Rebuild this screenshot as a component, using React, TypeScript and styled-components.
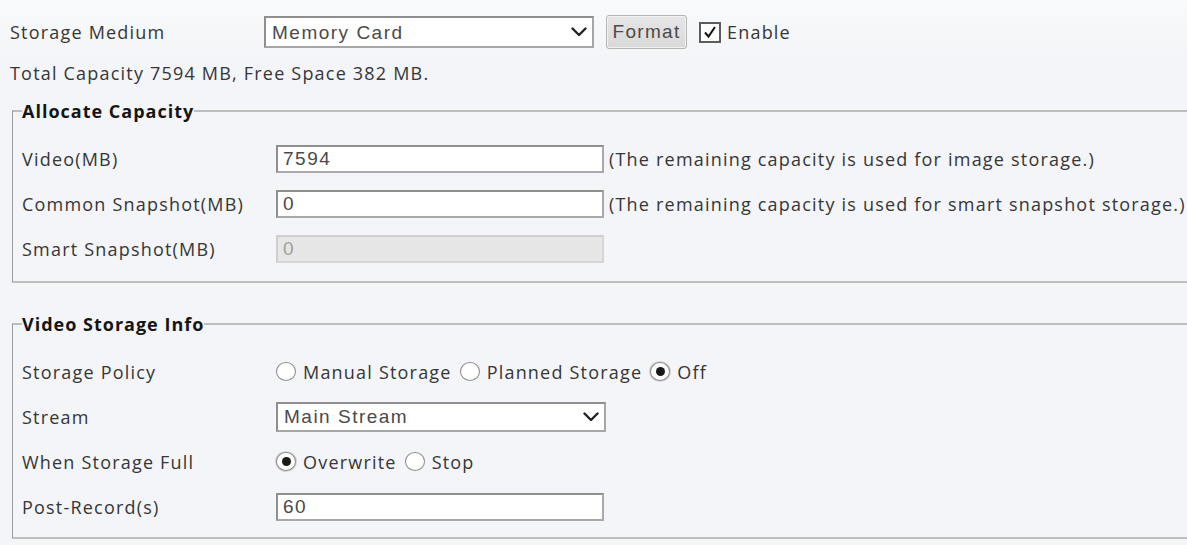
import React from "react";
import styled, { createGlobalStyle } from "styled-components";

const GlobalStyle = createGlobalStyle`
  html, body {
    margin: 0;
    padding: 0;
    background: #f3f5f8;
    overflow: hidden;
  }
`;

const Page = styled.div`
  width: 1187px;
  min-height: 545px;
  box-sizing: border-box;
  padding: 16px 0 0 10px;
  background: linear-gradient(#f9fafb 0px, #f3f5f8 60px);
  font-family: "Open Sans", "Noto Sans", sans-serif;
  font-size: 18px;
  letter-spacing: 1.2px;
  color: #363636;
`;

const TopRow = styled.div`
  display: flex;
  align-items: center;
  height: 32px;
`;

const Label = styled.div`
  width: 254px;
  flex: none;
  line-height: 24px;
  white-space: nowrap;
`;

const SelectWrap = styled.div<{ $w: number; $h: number }>`
  position: relative;
  width: ${(p) => p.$w}px;
  height: ${(p) => p.$h}px;
  flex: none;
`;

const NativeSelect = styled.select`
  appearance: none;
  -webkit-appearance: none;
  width: 100%;
  height: 100%;
  box-sizing: border-box;
  margin: 0;
  padding: 0 30px 0 6px;
  border: 2px solid #8f8f8f;
  border-right-color: #a6a6a6;
  border-bottom-color: #a6a6a6;
  background: #ffffff;
  font-family: "Liberation Sans", Arial, sans-serif;
  font-size: 19px;
  letter-spacing: 1.5px;
  color: #4a4a4a;
  outline: none;
`;

const Chevron = styled.svg`
  position: absolute;
  right: 7px;
  top: 50%;
  transform: translateY(-50%);
  pointer-events: none;
`;

const FormatButton = styled.button`
  margin-left: 12px;
  height: 34px;
  width: 81px;
  box-sizing: border-box;
  border: 1px solid #b4b4b4;
  border-radius: 3px;
  background: linear-gradient(#e6e6e6, #d9d9d9);
  box-shadow: inset 0 0 0 1px #f2f2f2;
  font-family: "Liberation Sans", Arial, sans-serif;
  font-size: 19px;
  letter-spacing: 1.3px;
  color: #4a4a4a;
  padding: 0;
`;

const CheckLabel = styled.label`
  display: flex;
  align-items: center;
  margin-left: 12px;
  gap: 6px;
`;

const CheckBox = styled.span`
  width: 22px;
  height: 21px;
  box-sizing: border-box;
  border: 2px solid #5c5c5c;
  background: #fff;
  display: flex;
  align-items: center;
  justify-content: center;
`;

const InfoLine = styled.div`
  margin-top: 13px;
  line-height: 24px;
`;

const Fieldset = styled.fieldset<{ $mt: number; $pb: number }>`
  margin: ${(p) => p.$mt}px -4px 0 2px;
  padding: 0 0 ${(p) => p.$pb}px 9px;
  border-style: solid;
  border-width: 2px 2px 2px 1px;
  border-color: #bdbdbd;
  border-left-color: #9a9a9a;
  min-width: 0;
`;

const Legend = styled.legend`
  padding: 0;
  margin-left: 0;
  line-height: 24px;
  font-weight: 700;
  font-size: 18px;
  letter-spacing: 1px;
  color: #151515;
`;

const Rows = styled.div`
  padding-top: 13px;
  display: flex;
  flex-direction: column;
`;

const Row = styled.div`
  display: flex;
  align-items: center;
  height: 45px;
`;

const TextInput = styled.input<{ $disabled?: boolean }>`
  width: 328px;
  height: 28px;
  box-sizing: border-box;
  margin: 0;
  padding: 0 5px;
  border: 2px solid ${(p) => (p.$disabled ? "#cfcfcf" : "#8f8f8f")};
  border-right-color: ${(p) => (p.$disabled ? "#d6d6d6" : "#a9a9a9")};
  border-bottom-color: ${(p) => (p.$disabled ? "#d6d6d6" : "#a9a9a9")};
  background: ${(p) => (p.$disabled ? "#e6e6e6" : "#ffffff")};
  color: ${(p) => (p.$disabled ? "#a0a0a0" : "#4a4a4a")};
  font-family: "Liberation Sans", Arial, sans-serif;
  font-size: 19px;
  letter-spacing: 1.5px;
  outline: none;
`;

const Hint = styled.span`
  margin-left: 5px;
  white-space: nowrap;
`;

const RadioGroup = styled.div`
  display: flex;
  align-items: center;
  gap: 8px;
`;

const RadioItem = styled.label`
  display: flex;
  align-items: center;
  gap: 7px;
  white-space: nowrap;
`;

const RadioCircle = styled.span<{ $on?: boolean }>`
  width: 20px;
  height: 19px;
  box-sizing: border-box;
  border-radius: 50%;
  border: 1px solid #8a8a8a;
  background: #fff;
  box-shadow: ${(p) => (p.$on ? "0 0 0 1px #d6d6d6" : "none")};
  display: flex;
  align-items: center;
  justify-content: center;
  &::after {
    content: "";
    width: 9px;
    height: 9px;
    border-radius: 50%;
    background: ${(p) => (p.$on ? "#1a1a1a" : "transparent")};
  }
`;

const ChevronIcon = () => (
  <Chevron width="16" height="10" viewBox="0 0 16 10">
    <path d="M1.5 1.5 L8 8 L14.5 1.5" fill="none" stroke="#222" strokeWidth="2.4" strokeLinecap="round" strokeLinejoin="round" />
  </Chevron>
);

const Select = ({ w, h, value }: { w: number; h: number; value: string }) => (
  <SelectWrap $w={w} $h={h}>
    <NativeSelect defaultValue={value}>
      <option>{value}</option>
    </NativeSelect>
    <ChevronIcon />
  </SelectWrap>
);

const Radio = ({ label, on }: { label: string; on?: boolean }) => (
  <RadioItem>
    <RadioCircle $on={on} />
    {label}
  </RadioItem>
);

export default function App() {
  return (
    <>
      <GlobalStyle />
      <Page>
        <TopRow>
          <Label>Storage Medium</Label>
          <Select w={330} h={32} value="Memory Card" />
          <FormatButton>Format</FormatButton>
          <CheckLabel>
            <CheckBox>
              <svg width="14" height="14" viewBox="0 0 14 14">
                <path d="M2 7.5 L5.5 11.5 L12 2" fill="none" stroke="#111" strokeWidth="2" />
              </svg>
            </CheckBox>
            Enable
          </CheckLabel>
        </TopRow>
        <InfoLine>Total Capacity 7594 MB, Free Space 382 MB.</InfoLine>

        <Fieldset $mt={14} $pb={10}>
          <Legend>Allocate Capacity</Legend>
          <Rows>
            <Row>
              <Label>Video(MB)</Label>
              <TextInput defaultValue="7594" />
              <Hint>(The remaining capacity is used for image storage.)</Hint>
            </Row>
            <Row>
              <Label>Common Snapshot(MB)</Label>
              <TextInput defaultValue="0" />
              <Hint>(The remaining capacity is used for smart snapshot storage.)</Hint>
            </Row>
            <Row>
              <Label>Smart Snapshot(MB)</Label>
              <TextInput defaultValue="0" disabled $disabled />
            </Row>
          </Rows>
        </Fieldset>

        <Fieldset $mt={29} $pb={8}>
          <Legend>Video Storage Info</Legend>
          <Rows>
            <Row>
              <Label>Storage Policy</Label>
              <RadioGroup>
                <Radio label="Manual Storage" />
                <Radio label="Planned Storage" />
                <Radio label="Off" on />
              </RadioGroup>
            </Row>
            <Row>
              <Label>Stream</Label>
              <Select w={330} h={30} value="Main Stream" />
            </Row>
            <Row>
              <Label>When Storage Full</Label>
              <RadioGroup>
                <Radio label="Overwrite" on />
                <Radio label="Stop" />
              </RadioGroup>
            </Row>
            <Row>
              <Label>Post-Record(s)</Label>
              <TextInput defaultValue="60" />
            </Row>
          </Rows>
        </Fieldset>
      </Page>
    </>
  );
}
